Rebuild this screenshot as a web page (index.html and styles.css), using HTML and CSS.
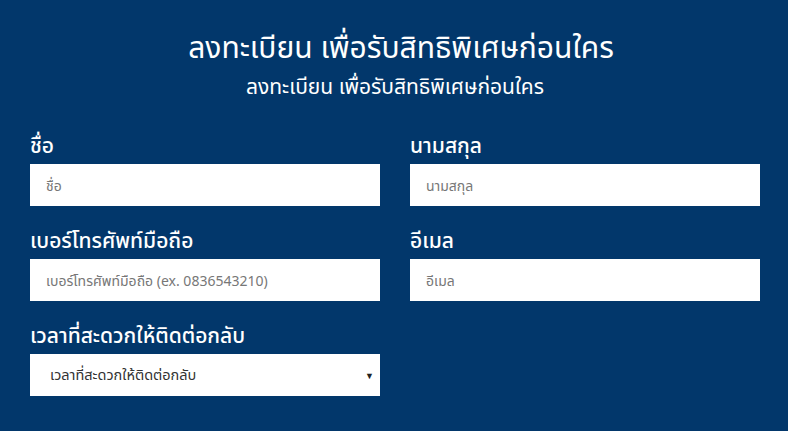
FILE: index.html
```html
<!DOCTYPE html>
<html lang="th">
<head>
<meta charset="utf-8">
<link rel="stylesheet" href="styles.css">
</head>
<body>
<section class="register">
  <header class="head">
    <h1 class="title">ลงทะเบียน เพื่อรับสิทธิพิเศษก่อนใคร</h1>
    <p class="subtitle">ลงทะเบียน เพื่อรับสิทธิพิเศษก่อนใคร</p>
  </header>
  <form class="form">
    <div class="field">
      <label class="label">ชื่อ</label>
      <input class="input" type="text" placeholder="ชื่อ">
    </div>
    <div class="field">
      <label class="label">นามสกุล</label>
      <input class="input" type="text" placeholder="นามสกุล">
    </div>
    <div class="field">
      <label class="label">เบอร์โทรศัพท์มือถือ</label>
      <input class="input" type="text" placeholder="เบอร์โทรศัพท์มือถือ (ex. 0836543210)">
    </div>
    <div class="field">
      <label class="label">อีเมล</label>
      <input class="input" type="text" placeholder="อีเมล">
    </div>
    <div class="field">
      <label class="label">เวลาที่สะดวกให้ติดต่อกลับ</label>
      <div class="select">
        <span class="select-text">เวลาที่สะดวกให้ติดต่อกลับ</span>
        <span class="caret">▼</span>
      </div>
    </div>
  </form>
</section>
</body>
</html>
```
FILE: styles.css
```css
* { box-sizing: border-box; }
html, body { margin: 0; padding: 0; }
body {
  background: #02376b;
  font-family: "Noto Sans", "Noto Sans Thai", sans-serif;
  color: #fff;
  width: 788px;
  height: 431px;
  overflow: hidden;
}
.register {
  padding: 28px 28px 0 30px;
}
.head {
  text-align: center;
}
.title {
  margin: 0;
  padding-left: 12px;
  font-size: 30px;
  font-weight: 400;
  line-height: 38px;
}
.subtitle {
  margin: 6px 0 0;
  font-size: 21px;
  line-height: 28px;
}
.form {
  margin-top: 27px;
  display: grid;
  grid-template-columns: 350px 350px;
  column-gap: 30px;
  row-gap: 16px;
}
.field {
  display: flex;
  flex-direction: column;
}
.label {
  font-size: 21px;
  line-height: 37px;
  font-weight: 500;
}
.input, .select {
  height: 42px;
  border: none;
  background: #fff;
  padding: 0 16px;
  font-family: inherit;
  font-size: 14px;
  color: #333;
  outline: none;
}
.input::placeholder { color: #777; }
.select {
  display: flex;
  align-items: center;
  justify-content: space-between;
  padding: 0 6px 0 20px;
}
.select-text { color: #333; font-size: 14.5px; }
.caret { font-size: 9px; color: #222; }
```
